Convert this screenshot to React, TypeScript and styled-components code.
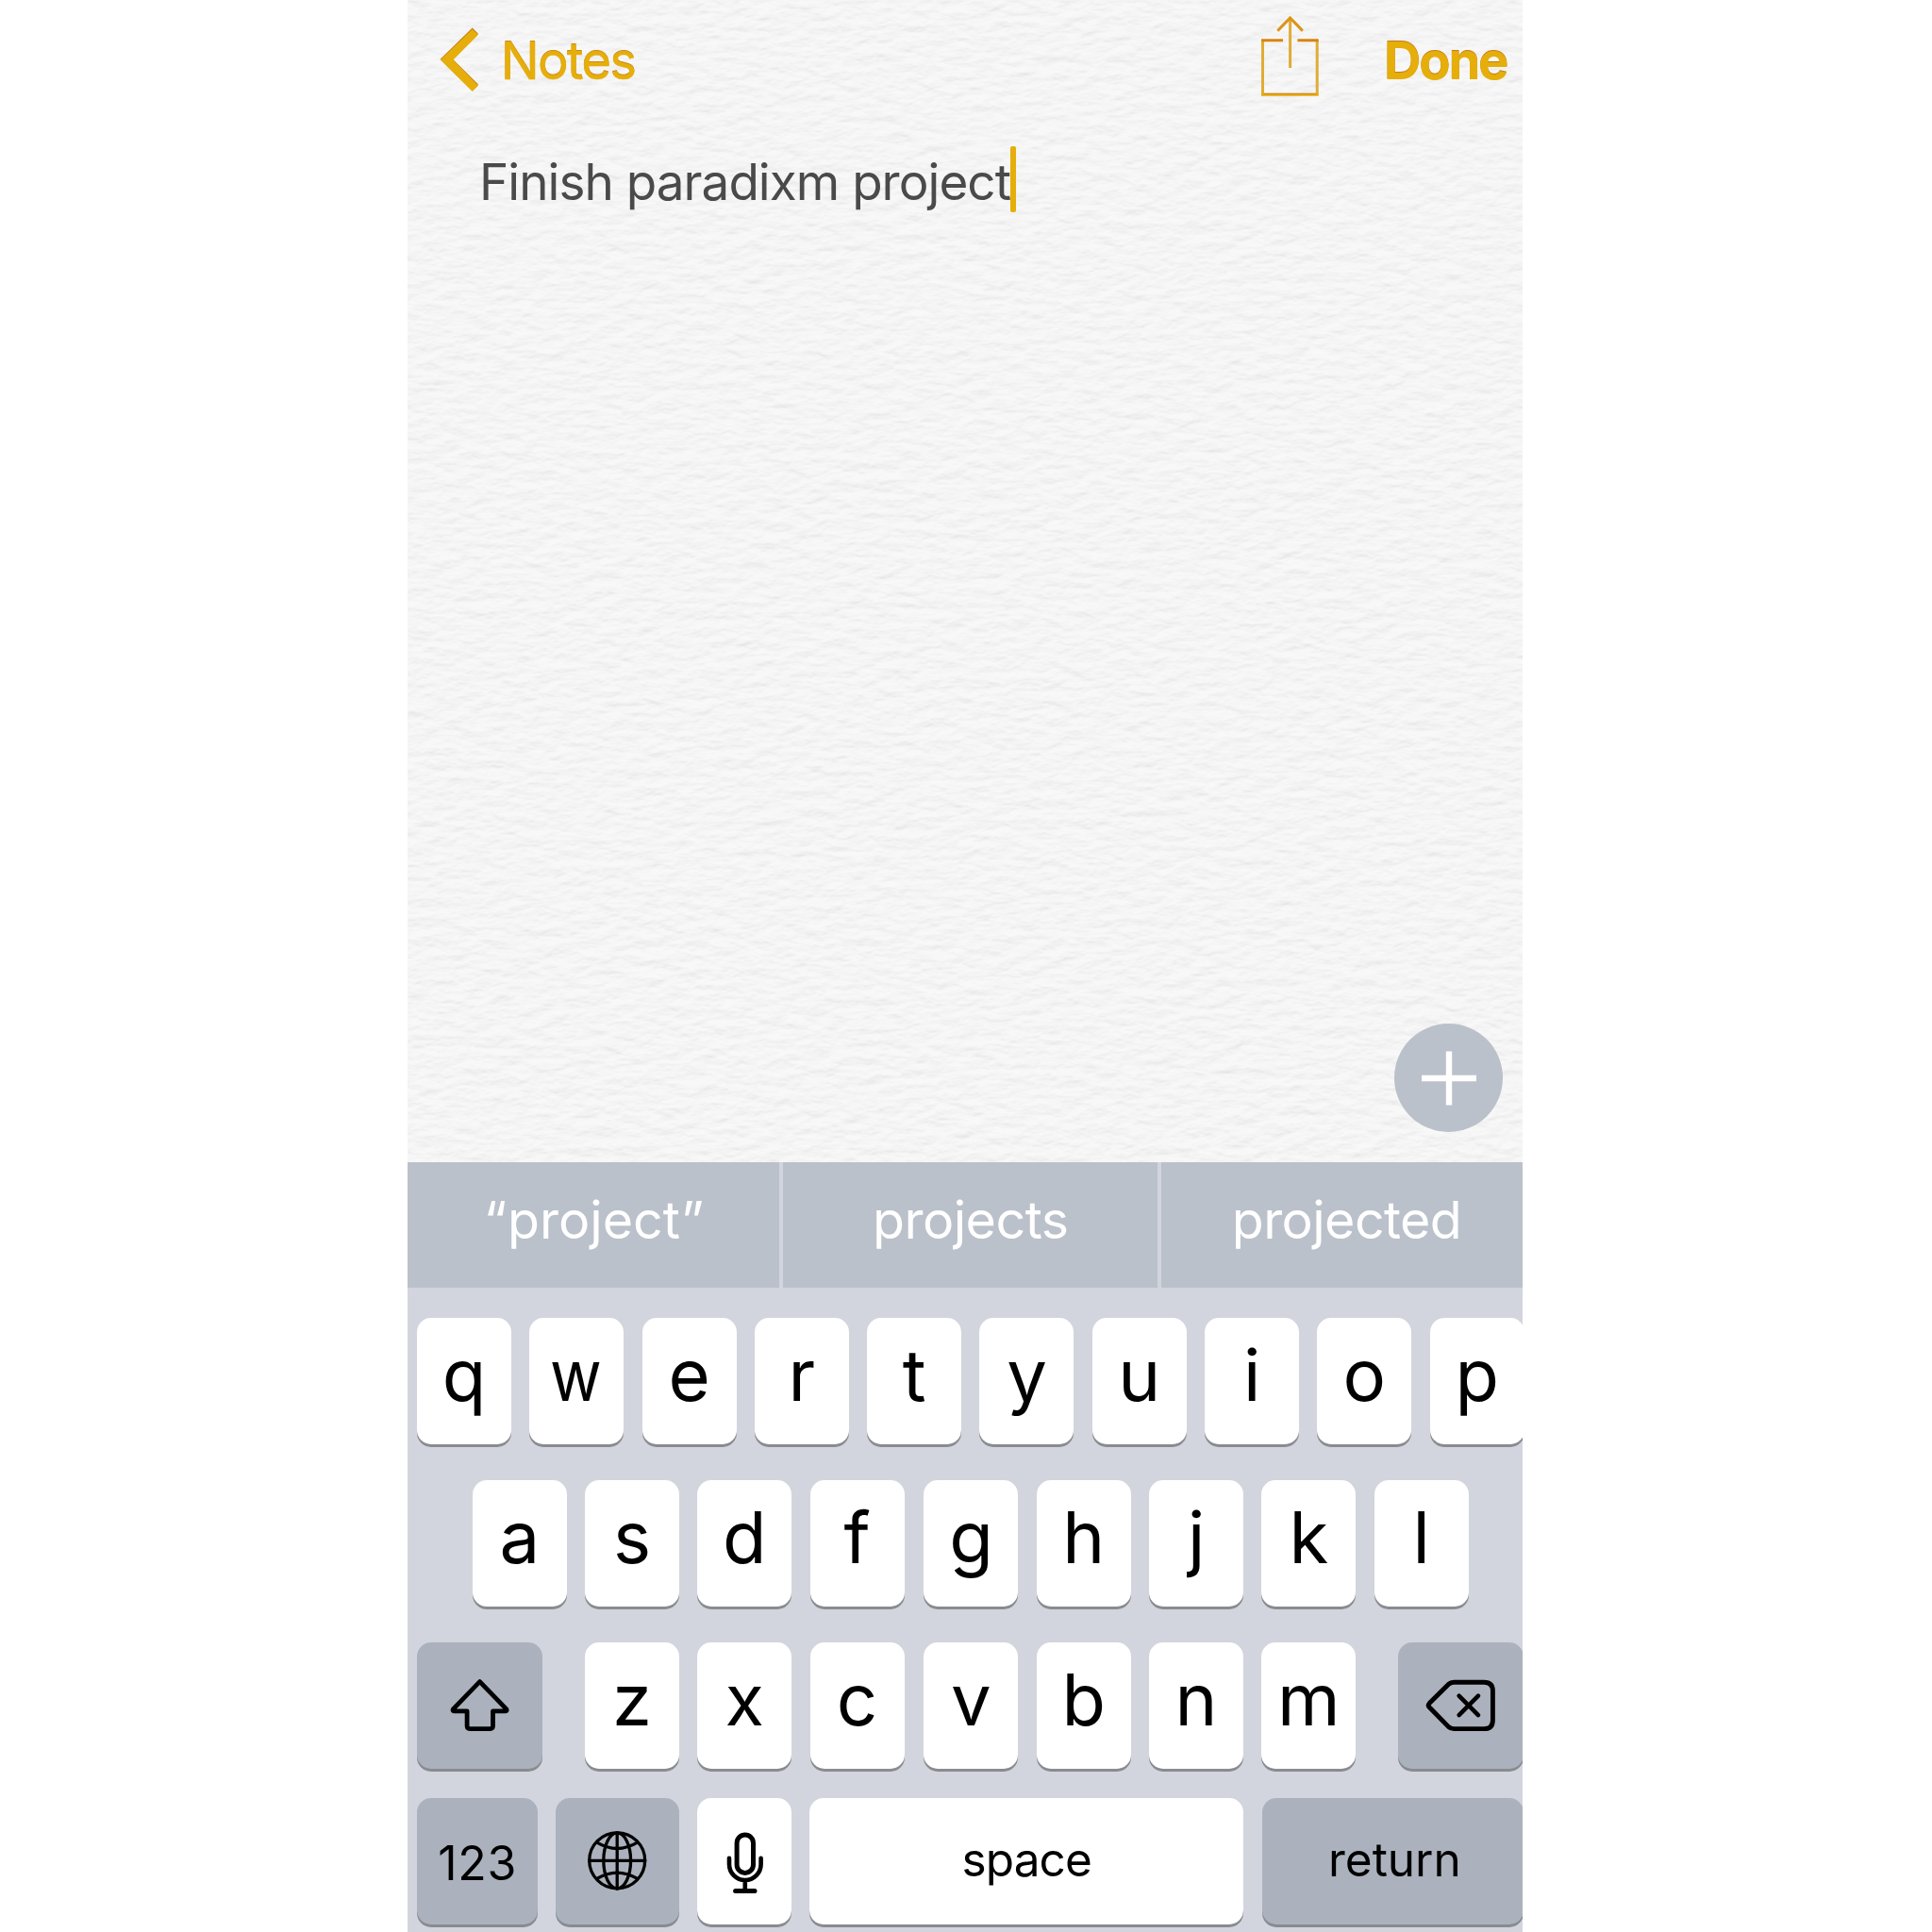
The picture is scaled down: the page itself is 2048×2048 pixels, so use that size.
import React from "react";
import styled, { createGlobalStyle, css } from "styled-components";

const GlobalStyle = createGlobalStyle`
  * { box-sizing: border-box; }
  body { margin: 0; background: #ffffff; }
`;

const gold = "#e5ae0b";
const goldEdge = "#c67a14";
const barGrey = "#bbc1ca";
const trayGrey = "#d2d5dd";

const Page = styled.div`
  width: 2048px;
  height: 2048px;
  display: flex;
  padding-left: 432px;
  overflow: hidden;
  font-family: Inter, "Liberation Sans", sans-serif;
`;

const Phone = styled.main`
  width: 1182px;
  height: 2048px;
  display: flex;
  flex-direction: column;
  overflow: hidden;
`;

/* ---------- note ---------- */

const Note = styled.section`
  position: relative;
  isolation: isolate;
  height: 1232px;
  flex: none;
  display: flex;
  flex-direction: column;
  background: #f6f6f6;
`;

const PaperSvg = styled.svg`
  position: absolute;
  inset: 0;
  z-index: -1;
  width: 100%;
  height: 100%;
  opacity: 0.32;
`;

const NavBar = styled.header`
  height: 126px;
  display: flex;
  align-items: flex-start;
  padding-left: 34px;
`;

const NavLabel = styled.span<{ $bold?: boolean }>`
  font-size: 54.5px;
  line-height: 126px;
  padding-top: 1px;
  font-weight: ${(p) => (p.$bold ? 700 : 400)};
  letter-spacing: ${(p) => (p.$bold ? "-2.2px" : "-1.8px")};
  color: ${gold};
  -webkit-text-stroke: ${(p) => (p.$bold ? "0" : "0.4px")} ${gold};
  text-shadow: 0 -1px 0 ${goldEdge};
  white-space: nowrap;
`;

const BackButton = styled.a`
  display: flex;
  align-items: flex-start;
  gap: 22.7px;
  width: 869px;
`;

const ChevronSvg = styled.svg`
  width: 42px;
  height: 70px;
  margin-top: 29px;
`;

const ShareSvg = styled.svg`
  width: 66px;
  height: 90px;
  margin: 14px 66px 0 0;
  flex: none;
`;

const Body = styled.div`
  flex: 1;
  display: flex;
  align-items: flex-start;
  padding: 29px 0 0 76px;
`;

const BodyText = styled.span`
  font-size: 53px;
  line-height: 70px;
  padding-top: 2.5px;
  letter-spacing: -0.96px;
  color: #4a4a4a;
  white-space: nowrap;
`;

const Caret = styled.span`
  width: 6px;
  height: 70px;
  margin-left: 0.4px;
  border-radius: 2px;
  background: ${gold};
`;

const AddButton = styled.button`
  align-self: flex-end;
  display: grid;
  place-items: center;
  width: 115px;
  height: 115px;
  margin: 0 21px 32px 0;
  padding: 0;
  border: 0;
  border-radius: 50%;
  background: ${barGrey};
`;

/* ---------- keyboard ---------- */

const Suggestions = styled.div`
  height: 133px;
  flex: none;
  display: grid;
  grid-template-columns: 394px 397.5px 393px;
  column-gap: 3.5px;
  background: ${trayGrey};
  overflow: hidden;
`;

const Suggestion = styled.div<{ $spacing?: string }>`
  display: flex;
  justify-content: center;
  align-items: center;
  padding: 0 0 12px 1px;
  background: ${barGrey};
  color: #ffffff;
  font-size: 55.5px;
  line-height: 66px;
  letter-spacing: ${(p) => p.$spacing ?? "-0.5px"};
  white-space: nowrap;
`;

const Quote = styled.span`
  padding: 0 0.8px;
`;

const Tray = styled.div`
  flex: 1;
  display: flex;
  flex-direction: column;
  padding: 32px 0 0 10px;
  background: ${trayGrey};
`;

const KeyRow = styled.div<{ $indent?: number; $below?: number }>`
  display: flex;
  flex: none;
  gap: 19.3px;
  height: 134px;
  padding-left: ${(p) => p.$indent ?? 0}px;
  margin-bottom: ${(p) => p.$below ?? 38}px;
`;

const Key = styled.button<{ $w?: number; $dark?: boolean; $before?: number }>`
  flex: none;
  display: flex;
  justify-content: center;
  align-items: center;
  width: ${(p) => p.$w ?? 100}px;
  height: 134px;
  margin: 0 0 0 ${(p) => p.$before ?? 0}px;
  padding: 0;
  border: 0;
  border-radius: 15px;
  background: ${(p) => (p.$dark ? "#abb2bd" : "#ffffff")};
  box-shadow: 0 3px 0 #898b90;
  font-family: inherit;
  color: #000000;
`;

const Letter = styled.span<{ $narrow?: boolean }>`
  font-size: 76px;
  line-height: 120px;
  padding-bottom: 14px;
  ${(p) =>
    p.$narrow &&
    css`
      padding-right: 3px;
      transform: scaleX(0.88);
    `}
`;

const Word = styled.span<{ $size: number; $spacing?: number; $top?: number; $bottom?: number; $left?: number }>`
  font-size: ${(p) => p.$size}px;
  line-height: 100px;
  letter-spacing: ${(p) => p.$spacing ?? 0}px;
  padding: ${(p) => p.$top ?? 0}px 0 ${(p) => p.$bottom ?? 0}px ${(p) => p.$left ?? 0}px;
`;

const KeySvg = styled.svg`
  width: 100px;
  height: 134px;
  fill: none;
  stroke: #000000;
  stroke-linecap: round;
  stroke-linejoin: round;
`;

function Paper() {
  return (
    <PaperSvg aria-hidden="true">
      <filter id="grain" x="0" y="0" width="100%" height="100%" colorInterpolationFilters="sRGB">
        <feTurbulence type="fractalNoise" baseFrequency="0.045 0.095" numOctaves={3} seed={7} result="n" />
        <feDiffuseLighting in="n" surfaceScale={1.1} diffuseConstant={1.03} lightingColor="#ffffff">
          <feDistantLight azimuth={260} elevation={68} />
        </feDiffuseLighting>
      </filter>
      <rect width="100%" height="100%" filter="url(#grain)" />
    </PaperSvg>
  );
}

/* The keyboard's right half, from g and v on, sits a hair further over. */
const letters = (row: string) =>
  row.split("").map((c) => (
    <Key key={c} $before={c === "g" || c === "v" ? 1.5 : 0}>
      <Letter $narrow={c === "w"}>{c}</Letter>
    </Key>
  ));

export default function App() {
  return (
    <>
      <GlobalStyle />
      <Page>
        <Phone>
          <Note>
            <Paper />
            <NavBar>
              <BackButton>
                <ChevronSvg viewBox="466 29 42 70">
                  <path d="M466.7 62.8 500.7 29.6 507 35.8 480 62.8 507 89.6 500.7 96Z" fill={goldEdge} />
                  <path d="M466.9 63.6 500.7 31 507 36.8 480.4 63.6 507 90.8 500.7 97Z" fill={gold} />
                </ChevronSvg>
                <NavLabel>Notes</NavLabel>
              </BackButton>
              <ShareSvg viewBox="1335 14 66 90" fill="none">
                <path d="M1338.5 43V100M1396.2 43V100M1367.6 20V72" stroke="#e0ac35" strokeWidth="3" />
                <path d="M1337 42.7H1360M1375.4 42.7H1397.7" stroke="#d9850f" strokeWidth="3" />
                <path d="M1354.3 32.6 1367.6 19 1380.8 32.6" stroke="#dc9418" strokeWidth="3" />
                <path d="M1337 100.4H1397.7" stroke="#e8a80c" strokeWidth="2.8" />
                <path d="M1340 99.2H1394.7" stroke="#c9811a" strokeWidth="1" />
              </ShareSvg>
              <NavLabel $bold>Done</NavLabel>
            </NavBar>
            <Body>
              <BodyText>Finish paradixm project</BodyText>
              <Caret />
            </Body>
            <AddButton aria-label="Add">
              <svg width="58" height="58" viewBox="0 0 58 58">
                <path d="M0 29H58M29 0.5V57.5" stroke="#ffffff" strokeWidth="6.4" />
              </svg>
            </AddButton>
          </Note>

          <Suggestions>
            <Suggestion $spacing="0">
              <Quote>“</Quote>project<Quote>”</Quote>
            </Suggestion>
            <Suggestion>projects</Suggestion>
            <Suggestion $spacing="-0.6px">projected</Suggestion>
          </Suggestions>

          <Tray>
            <KeyRow>{letters("qwertyuiop")}</KeyRow>
            <KeyRow $indent={58.8}>{letters("asdfghjkl")}</KeyRow>
            <KeyRow $below={31}>
              <Key $dark $w={133.4} aria-label="shift">
                <KeySvg viewBox="458.7 1741 100 134" strokeWidth="4.8">
                  <path d="M508.3 1782.6 536.4 1811.6Q537.6 1813.6 535.4 1813.8H522.2V1829.6Q522.2 1832.6 519.2 1832.6H497.8Q494.8 1832.6 494.8 1829.6V1813.8H481.2Q479 1813.6 480.2 1811.6Z" />
                </KeySvg>
              </Key>
              <Key $before={25.3}>
                <Letter>z</Letter>
              </Key>
              {letters("xcvbnm")}
              <Key $dark $w={133} $before={25.3} aria-label="delete">
                <KeySvg viewBox="1498.2 1741 100 134" strokeWidth="4.9">
                  <path d="M1515.4 1805.6 1535.6 1785.4Q1538 1783.2 1541.4 1783.2H1573.4Q1582.6 1783.2 1582.6 1792.4V1823.4Q1582.6 1832.6 1573.4 1832.6H1541.4Q1538 1832.6 1535.6 1830.4L1515.4 1809.8Q1513.4 1807.7 1515.4 1805.6Z" />
                  <path d="M1546.8 1797.6 1567.2 1818.2M1567.2 1797.6 1546.8 1818.2" strokeWidth="4.5" />
                </KeySvg>
              </Key>
            </KeyRow>
            <KeyRow>
              <Key $dark $w={128.2}>
                <Word $size={50} $spacing={0.7} $top={3.5}>
                  123
                </Word>
              </Key>
              <Key $dark $w={130.2} aria-label="next keyboard">
                <KeySvg viewBox="604.6 1906 100 134" strokeWidth="3.3">
                  <circle cx="653.8" cy="1972.3" r="29.5" />
                  <ellipse cx="653.8" cy="1972.3" rx="14.4" ry="29.5" />
                  <path d="M653.8 1943V2002M624.2 1972.3H683.4" />
                  <path d="M632.4 1953.2Q653.8 1965.8 675.2 1953.2M632.4 1991.4Q653.8 1978.8 675.2 1991.4" />
                </KeySvg>
              </Key>
              <Key aria-label="dictate">
                <KeySvg viewBox="739.2 1906 100 134" strokeWidth="5">
                  <rect x="781.3" y="1945" width="17.4" height="40.4" rx="8.7" />
                  <path d="M773.2 1969.8V1976.3A16.8 16.8 0 0 0 806.8 1976.3V1969.8M790 1994V2003" strokeWidth="4.6" />
                  <path d="M779.8 2004.4H800.2" />
                </KeySvg>
              </Key>
              <Key $w={460}>
                <Word $size={49.5} $spacing={-0.85} $bottom={3.5}>
                  space
                </Word>
              </Key>
              <Key $dark $w={277.6}>
                <Word $size={49.5} $bottom={3.5} $left={4}>
                  return
                </Word>
              </Key>
            </KeyRow>
          </Tray>
        </Phone>
      </Page>
    </>
  );
}
